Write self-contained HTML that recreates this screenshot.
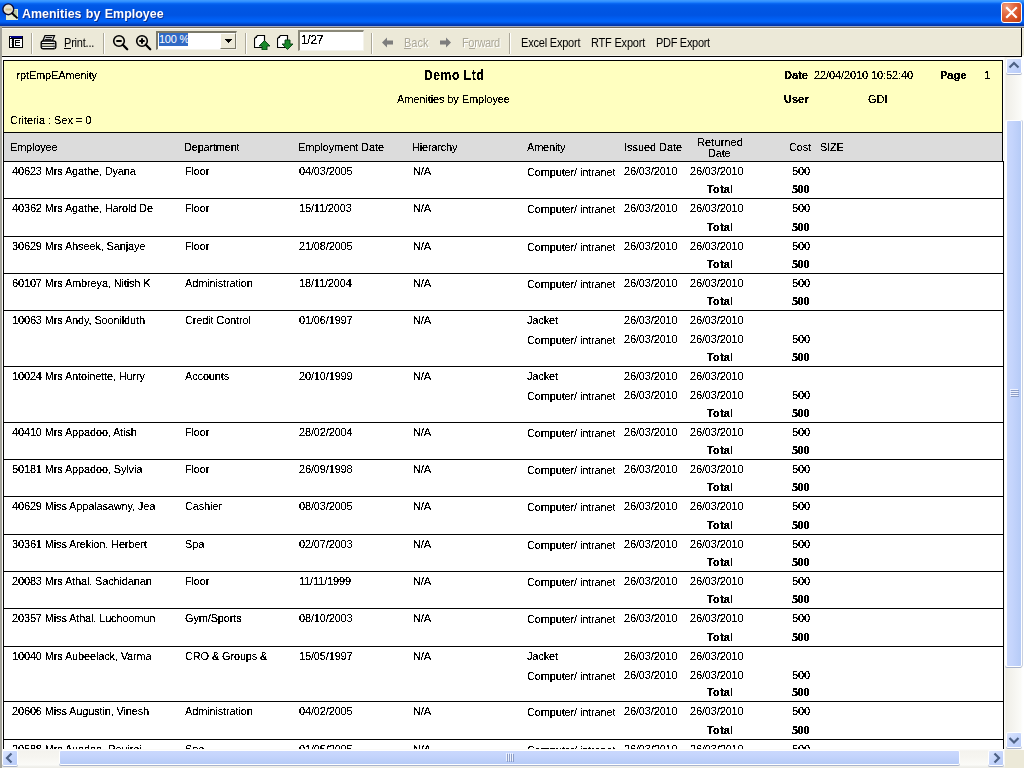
<!DOCTYPE html>
<html><head><meta charset="utf-8">
<style>
*{margin:0;padding:0;box-sizing:border-box}
html,body{width:1024px;height:768px;overflow:hidden;background:#fff;font-family:"Liberation Sans",sans-serif;position:relative}
.a{position:absolute}
.t{position:absolute;white-space:pre;color:#000}
#title{left:0;top:0;width:1024px;height:26px;background:linear-gradient(#3d9bff 0px,#3a97ff 1px,#1c7efc 2.5px,#0a68f2 3.5px,#005ae8 5px,#0056e4 9px,#0054e2 15px,#005cef 18px,#0064fa 21px,#0060f4 22px,#004cd6 23.5px,#0038b0 25px,#0032a4 26px);}
#ttxt{left:21.5px;top:7px;word-spacing:1px;color:#fff;font-weight:bold;font-size:13.5px;line-height:13px;transform:scaleX(0.922);transform-origin:0 0;text-shadow:1px 1px 0 #0a2a8a;white-space:pre}
#close{left:1001px;top:2px;width:21px;height:21px;border:1px solid #fff;border-radius:3px;background:radial-gradient(circle at 25% 20%,#f0a080 0,#e2643c 40%,#d24a1c 75%,#b8380e 100%);}
#view{left:0;top:0;width:1004px;height:749px;overflow:hidden}
.sep{position:absolute;top:33px;height:21px;width:1px;background:#aca899;box-shadow:1px 0 0 #fff}
</style></head><body>
<svg width="0" height="0" style="position:absolute"><filter id="crisp" x="-10%" y="-50%" width="120%" height="200%" color-interpolation-filters="sRGB"><feComponentTransfer><feFuncA type="discrete" tableValues="0 0 1 1 1"/></feComponentTransfer></filter><filter id="crispB" x="-10%" y="-50%" width="120%" height="200%" color-interpolation-filters="sRGB"><feComponentTransfer><feFuncA type="discrete" tableValues="0 0 0 1 1 1 1 1 1 1"/></feComponentTransfer></filter></svg>
<div id="title" class="a"></div>
<svg class="a" style="left:0px;top:0px" width="22" height="24" viewBox="0 0 22 24">
 <rect x="6" y="9" width="12" height="11" fill="#e4ecd0"/>
 <rect x="13" y="10" width="4" height="7" fill="#b8c8a0"/>
 <circle cx="8.3" cy="9.3" r="5.4" fill="#e8e4d0" stroke="#0a0a30" stroke-width="1.4"/>
 <rect x="5.5" y="8.5" width="6" height="2" fill="#c0a860" opacity="0.6"/>
 <path d="M11.5 12.8 L17.6 18.4" stroke="#000" stroke-width="1.9"/>
</svg>
<div id="ttxt" class="a">Amenities by Employee</div>
<div id="close" class="a"><svg class="a" style="left:0;top:0" width="19" height="19" viewBox="0 0 19 19"><path d="M5 5 L14 14 M14 5 L5 14" stroke="#fff" stroke-width="2.2" stroke-linecap="square"/></svg></div>
<!-- toolbar -->
<div class="a" style="left:0;top:26px;width:1024px;height:1px;background:#9eaac4"></div>
<div class="a" style="left:0;top:27px;width:1024px;height:1px;background:#726a5c"></div>
<div class="a" style="left:0;top:28px;width:1024px;height:28px;background:#ece9d8;border-top:1px solid #fcfcf8;border-bottom:1px solid #f6f5ee"></div>
<div class="a" style="left:0;top:26px;width:2px;height:742px;background:#a4a39a"></div>
<div class="a" style="left:2px;top:56px;width:1020px;height:1px;background:#000"></div>
<div class="a" style="left:1021px;top:28px;width:1px;height:29px;background:#000"></div>
<!-- tree icon -->
<svg class="a" style="left:9px;top:36px" width="14" height="12" viewBox="0 0 14 12" shape-rendering="crispEdges">
 <rect x="0" y="0" width="14" height="12" fill="#000"/>
 <rect x="1" y="0" width="12" height="2" fill="#000080"/>
 <rect x="1" y="1" width="1" height="1" fill="#fff"/>
 <rect x="1" y="3" width="2" height="8" fill="#fff"/>
 <rect x="2" y="4" width="1" height="1" fill="#c0c0c0"/><rect x="2" y="6" width="1" height="1" fill="#c0c0c0"/><rect x="2" y="8" width="1" height="1" fill="#c0c0c0"/>
 <rect x="5" y="3" width="8" height="8" fill="#fff"/>
 <rect x="6" y="4" width="1" height="6" fill="#000"/>
 <rect x="6" y="4" width="5" height="1" fill="#000"/>
 <rect x="6" y="6" width="5" height="1" fill="#000"/>
 <rect x="6" y="9" width="5" height="1" fill="#000"/>
</svg>
<div class="sep" style="left:31px"></div>
<!-- printer -->
<svg class="a" style="left:40px;top:35px" width="17" height="15" viewBox="0 0 17 15">
 <path d="M5 0.7 H14.5 L12.3 6 H2.8 Z" fill="#fff" stroke="#000" stroke-width="1.2"/>
 <path d="M5.6 2.6 H12.2 M4.6 4.4 H11.5" stroke="#000" stroke-width="1"/>
 <path d="M1.2 8 Q1.2 6 3.2 6 H13.5 Q15.8 6 15.8 8 V11.5 Q15.8 13.8 13.5 13.8 H3.2 Q1.2 13.8 1.2 11.5 Z" fill="#fff" stroke="#000" stroke-width="1.4"/>
 <path d="M1.5 8.6 H15.5 M2 11.2 H15" stroke="#000" stroke-width="1.1"/>
 <rect x="3" y="9.4" width="9" height="1.2" fill="#d8d8b0"/>
 <path d="M13.5 7.5 L15 9 M13.5 10 L15 11.5 M13.5 12.5 L14.5 13.3" stroke="#808080" stroke-width="0.8"/>
</svg>
<div class="t" style="left:64px;top:37px;font-size:11px;line-height:11px;letter-spacing:-0.2px;transform:scaleY(1.125);transform-origin:0 0">Print...</div>
<div class="a" style="left:64px;top:48px;width:7px;height:1px;background:#000"></div>
<div class="sep" style="left:103px"></div>
<!-- zoom out / in -->
<svg class="a" style="left:111px;top:33px" width="20" height="18" viewBox="0 0 20 18">
 <circle cx="8" cy="8" r="5.3" fill="none" stroke="#000" stroke-width="1.6"/>
 <path d="M5.3 8 H10.7" stroke="#000" stroke-width="2"/>
 <path d="M11.8 11.8 L16.2 16.2" stroke="#000" stroke-width="2.3" stroke-linecap="round"/>
</svg>
<svg class="a" style="left:134px;top:33px" width="20" height="18" viewBox="0 0 20 18">
 <circle cx="8" cy="8" r="5.3" fill="none" stroke="#000" stroke-width="1.6"/>
 <path d="M5.3 8 H10.7 M8 5.3 V10.7" stroke="#000" stroke-width="2"/>
 <path d="M11.8 11.8 L16.2 16.2" stroke="#000" stroke-width="2.3" stroke-linecap="round"/>
</svg>
<!-- zoom combo -->
<div class="a" style="left:156px;top:31px;width:81px;height:19px;background:#fff;border-top:2px solid #7a7868;border-left:2px solid #7a7868;border-right:1px solid #f4f3ec;border-bottom:1px solid #f4f3ec"></div>
<div class="a" style="left:159px;top:33px;width:29px;height:13px;background:#316ac5"></div>
<div class="t" style="left:159px;top:34px;font-size:11px;line-height:11px;color:#fff;letter-spacing:-0.25px">100 %</div>
<div class="a" style="left:220px;top:33px;width:16px;height:16px;background:#ece9d8;border-right:1px solid #7a7868;border-bottom:1px solid #7a7868;border-top:1px solid #fff;border-left:1px solid #fff"></div>
<svg class="a" style="left:225px;top:39px" width="7" height="4" viewBox="0 0 7 4" shape-rendering="crispEdges"><path d="M0 0 H7 V1 H6 V2 H5 V3 H4 V4 H3 V3 H2 V2 H1 V1 H0 Z" fill="#000"/></svg>
<div class="sep" style="left:245px"></div>
<!-- page up / down -->
<svg class="a" style="left:254px;top:35px" width="17" height="15" viewBox="0 0 17 15">
 <path d="M3.5 0.5 H10.5 V12.5 H0.5 V3.5 Z" fill="#fff" stroke="#000" stroke-width="1.15"/>
 <rect x="2" y="2" width="1" height="1" fill="#000"/>
 <path d="M10.5 5.5 L16 11 H13 V15 H8 V11 H5 Z" fill="#1a8a2a" stroke="#063a10" stroke-width="0.9" stroke-linejoin="miter"/>
</svg>
<svg class="a" style="left:277px;top:35px" width="17" height="15" viewBox="0 0 17 15">
 <path d="M3.5 0.5 H10.5 V12.5 H0.5 V3.5 Z" fill="#fff" stroke="#000" stroke-width="1.15"/>
 <rect x="2" y="2" width="1" height="1" fill="#000"/>
 <path d="M8 5 H13 V9 H16 L10.5 14.5 L5 9 H8 Z" fill="#1a8a2a" stroke="#063a10" stroke-width="0.9" stroke-linejoin="miter"/>
</svg>
<div class="a" style="left:298px;top:30px;width:66px;height:21px;background:#fff;border-top:2px solid #8a8878;border-left:2px solid #8a8878;border-right:1px solid #f4f3ec;border-bottom:1px solid #f4f3ec"></div>
<div class="t" style="filter:url(#crisp);left:301px;top:34px;font-size:12px;line-height:12px;letter-spacing:-0.3px">1/27</div>
<div class="sep" style="left:371px"></div>
<!-- back / forward -->
<svg class="a" style="left:382px;top:37px" width="12" height="11" viewBox="0 0 12 11"><path d="M0 5.5 L5 0.5 V3.5 H11 V7.5 H5 V10.5 Z" fill="#7d7d7d"/></svg>
<div class="t" style="left:404px;top:37px;font-size:11px;line-height:11px;letter-spacing:0px;transform:scaleY(1.125);transform-origin:0 0;color:#aca899;text-shadow:1px 1px 0 #fff">Back</div>
<div class="a" style="left:404px;top:48px;width:7px;height:1px;background:#aca899"></div>
<svg class="a" style="left:439px;top:37px" width="12" height="11" viewBox="0 0 12 11"><path d="M12 5.5 L7 0.5 V3.5 H1 V7.5 H7 V10.5 Z" fill="#7d7d7d"/></svg>
<div class="t" style="left:462px;top:37px;font-size:11px;line-height:11px;color:#aca899;letter-spacing:-0.35px;transform:scaleY(1.125);transform-origin:0 0;text-shadow:1px 1px 0 #fff">Forward</div>
<div class="a" style="left:469px;top:48px;width:6px;height:1px;background:#aca899"></div>
<div class="sep" style="left:509px"></div>
<div class="t" style="left:521px;top:37px;font-size:11px;line-height:11px;letter-spacing:-0.2px;transform:scaleY(1.125);transform-origin:0 0">Excel Export</div>
<div class="t" style="left:591px;top:37px;font-size:11px;line-height:11px;letter-spacing:-0.2px;transform:scaleY(1.125);transform-origin:0 0">RTF Export</div>
<div class="t" style="left:656px;top:37px;font-size:11px;line-height:11px;letter-spacing:-0.3px;transform:scaleY(1.125);transform-origin:0 0">PDF Export</div>
<!-- report header -->
<div class="a" style="left:3px;top:60px;width:1000px;height:73px;background:#ffffc0;border:1px solid #000;border-bottom:1px solid #000"></div>
<div class="a" style="left:3px;top:133px;width:1000px;height:29px;background:#dcdcdc;border-left:1px solid #000;border-right:1px solid #000"></div>
<div class="a" style="left:0;top:0;width:1024px;height:200px;filter:url(#crisp)">
<div class="t" style="left:424px;top:68px;font-size:14px;line-height:14px;font-weight:bold;letter-spacing:0.7px;transform:scaleX(0.86);transform-origin:0 0">Demo Ltd</div>
<div class="t" style="left:16.5px;top:70px;font-size:11px;line-height:11px;letter-spacing:-0.15px">rptEmpEAmenity</div>
<div class="t" style="left:397px;top:94px;font-size:11px;line-height:11px;letter-spacing:-0.1px">Amenities by Employee</div>
<div class="t" style="left:10px;top:115px;font-size:11px;line-height:11px;letter-spacing:-0.05px">Criteria : Sex = 0</div>
<div class="t" style="left:814px;top:70px;font-size:11px;line-height:11px;letter-spacing:-0.1px">22/04/2010 10:52:40</div>
<div class="t" style="left:984px;top:70px;font-size:11px;line-height:11px">1</div>
<div class="t" style="left:868px;top:94px;font-size:11px;line-height:11px">GDI</div>
<div class="t" style="left:10px;top:142px;font-size:11px;line-height:11px;letter-spacing:-0.2px">Employee</div>
<div class="t" style="left:184px;top:142px;font-size:11px;line-height:11px;letter-spacing:-0.2px">Department</div>
<div class="t" style="left:298px;top:142px;font-size:11px;line-height:11px;letter-spacing:-0.1px">Employment Date</div>
<div class="t" style="left:412px;top:142px;font-size:11px;line-height:11px;letter-spacing:-0.2px">Hierarchy</div>
<div class="t" style="left:527px;top:142px;font-size:11px;line-height:11px;letter-spacing:-0.2px">Amenity</div>
<div class="t" style="left:624px;top:142px;font-size:11px;line-height:11px;letter-spacing:-0.05px">Issued Date</div>
<div class="t" style="left:697px;top:137px;font-size:11px;line-height:11px;letter-spacing:0.1px">Returned</div>
<div class="t" style="left:708px;top:148px;font-size:11px;line-height:11px;letter-spacing:-0.2px">Date</div>
<div class="t" style="left:789px;top:142px;font-size:11px;line-height:11px;letter-spacing:-0.2px">Cost</div>
<div class="t" style="left:820px;top:142px;font-size:11px;line-height:11px;letter-spacing:-0.2px">SIZE</div>
</div>
<div class="a" style="left:0;top:0;width:1024px;height:200px;filter:url(#crispB)">
<div class="t" style="left:784px;top:70px;font-size:11px;line-height:11px;font-weight:bold">Date</div>
<div class="t" style="left:940px;top:70px;font-size:11px;line-height:11px;font-weight:bold">Page</div>
<div class="t" style="left:784px;top:94px;font-size:11px;line-height:11px;font-weight:bold">User</div>
</div>
<!-- left/right verticals -->
<div class="a" style="left:3px;top:161px;width:1px;height:588px;background:#000"></div>
<div class="a" style="left:1003px;top:161px;width:1px;height:588px;background:#000"></div>

<div id="view" class="a" style="filter:url(#crisp)"><div class="a" style="left:3px;top:161px;width:1001px;height:1px;background:#000"></div>
<div class="t" style="left:12px;top:166px;font-size:11px;line-height:11px;letter-spacing:-0.15px;">40623 Mrs Agathe, Dyana</div>
<div class="t" style="left:185px;top:166px;font-size:11px;line-height:11px;letter-spacing:-0.15px;">Floor</div>
<div class="t" style="left:299px;top:166px;font-size:11px;line-height:11px;letter-spacing:-0.15px;">04/03/2005</div>
<div class="t" style="left:413px;top:166px;font-size:11px;line-height:11px;letter-spacing:-0.15px;">N/A</div>
<div class="t" style="left:527px;top:167px;font-size:11px;line-height:11px;letter-spacing:-0.15px;">Computer/ intranet</div>
<div class="t" style="left:624px;top:166px;font-size:11px;line-height:11px;letter-spacing:-0.15px;">26/03/2010</div>
<div class="t" style="left:690px;top:166px;font-size:11px;line-height:11px;letter-spacing:-0.15px;">26/03/2010</div>
<div class="t" style="left:792px;top:166px;font-size:11px;line-height:11px;letter-spacing:-0.15px;">500</div>
<div class="a" style="left:3px;top:198px;width:1001px;height:1px;background:#000"></div>
<div class="t" style="left:12px;top:203px;font-size:11px;line-height:11px;letter-spacing:-0.15px;">40362 Mrs Agathe, Harold De</div>
<div class="t" style="left:185px;top:203px;font-size:11px;line-height:11px;letter-spacing:-0.15px;">Floor</div>
<div class="t" style="left:299px;top:203px;font-size:11px;line-height:11px;letter-spacing:-0.15px;">15/11/2003</div>
<div class="t" style="left:413px;top:203px;font-size:11px;line-height:11px;letter-spacing:-0.15px;">N/A</div>
<div class="t" style="left:527px;top:204px;font-size:11px;line-height:11px;letter-spacing:-0.15px;">Computer/ intranet</div>
<div class="t" style="left:624px;top:203px;font-size:11px;line-height:11px;letter-spacing:-0.15px;">26/03/2010</div>
<div class="t" style="left:690px;top:203px;font-size:11px;line-height:11px;letter-spacing:-0.15px;">26/03/2010</div>
<div class="t" style="left:792px;top:203px;font-size:11px;line-height:11px;letter-spacing:-0.15px;">500</div>
<div class="a" style="left:3px;top:236px;width:1001px;height:1px;background:#000"></div>
<div class="t" style="left:12px;top:241px;font-size:11px;line-height:11px;letter-spacing:-0.15px;">30629 Mrs Ahseek, Sanjaye</div>
<div class="t" style="left:185px;top:241px;font-size:11px;line-height:11px;letter-spacing:-0.15px;">Floor</div>
<div class="t" style="left:299px;top:241px;font-size:11px;line-height:11px;letter-spacing:-0.15px;">21/08/2005</div>
<div class="t" style="left:413px;top:241px;font-size:11px;line-height:11px;letter-spacing:-0.15px;">N/A</div>
<div class="t" style="left:527px;top:242px;font-size:11px;line-height:11px;letter-spacing:-0.15px;">Computer/ intranet</div>
<div class="t" style="left:624px;top:241px;font-size:11px;line-height:11px;letter-spacing:-0.15px;">26/03/2010</div>
<div class="t" style="left:690px;top:241px;font-size:11px;line-height:11px;letter-spacing:-0.15px;">26/03/2010</div>
<div class="t" style="left:792px;top:241px;font-size:11px;line-height:11px;letter-spacing:-0.15px;">500</div>
<div class="a" style="left:3px;top:273px;width:1001px;height:1px;background:#000"></div>
<div class="t" style="left:12px;top:278px;font-size:11px;line-height:11px;letter-spacing:-0.15px;">60107 Mrs Ambreya, Nitish K</div>
<div class="t" style="left:185px;top:278px;font-size:11px;line-height:11px;letter-spacing:-0.15px;">Administration</div>
<div class="t" style="left:299px;top:278px;font-size:11px;line-height:11px;letter-spacing:-0.15px;">18/11/2004</div>
<div class="t" style="left:413px;top:278px;font-size:11px;line-height:11px;letter-spacing:-0.15px;">N/A</div>
<div class="t" style="left:527px;top:279px;font-size:11px;line-height:11px;letter-spacing:-0.15px;">Computer/ intranet</div>
<div class="t" style="left:624px;top:278px;font-size:11px;line-height:11px;letter-spacing:-0.15px;">26/03/2010</div>
<div class="t" style="left:690px;top:278px;font-size:11px;line-height:11px;letter-spacing:-0.15px;">26/03/2010</div>
<div class="t" style="left:792px;top:278px;font-size:11px;line-height:11px;letter-spacing:-0.15px;">500</div>
<div class="a" style="left:3px;top:310px;width:1001px;height:1px;background:#000"></div>
<div class="t" style="left:12px;top:315px;font-size:11px;line-height:11px;letter-spacing:-0.15px;">10063 Mrs Andy, Soonilduth</div>
<div class="t" style="left:185px;top:315px;font-size:11px;line-height:11px;letter-spacing:-0.15px;">Credit Control</div>
<div class="t" style="left:299px;top:315px;font-size:11px;line-height:11px;letter-spacing:-0.15px;">01/06/1997</div>
<div class="t" style="left:413px;top:315px;font-size:11px;line-height:11px;letter-spacing:-0.15px;">N/A</div>
<div class="t" style="left:527px;top:315px;font-size:11px;line-height:11px;letter-spacing:-0.15px;">Jacket</div>
<div class="t" style="left:624px;top:315px;font-size:11px;line-height:11px;letter-spacing:-0.15px;">26/03/2010</div>
<div class="t" style="left:690px;top:315px;font-size:11px;line-height:11px;letter-spacing:-0.15px;">26/03/2010</div>
<div class="t" style="left:527px;top:335px;font-size:11px;line-height:11px;letter-spacing:-0.15px;">Computer/ intranet</div>
<div class="t" style="left:624px;top:334px;font-size:11px;line-height:11px;letter-spacing:-0.15px;">26/03/2010</div>
<div class="t" style="left:690px;top:334px;font-size:11px;line-height:11px;letter-spacing:-0.15px;">26/03/2010</div>
<div class="t" style="left:792px;top:334px;font-size:11px;line-height:11px;letter-spacing:-0.15px;">500</div>
<div class="a" style="left:3px;top:366px;width:1001px;height:1px;background:#000"></div>
<div class="t" style="left:12px;top:371px;font-size:11px;line-height:11px;letter-spacing:-0.15px;">10024 Mrs Antoinette, Hurry</div>
<div class="t" style="left:185px;top:371px;font-size:11px;line-height:11px;letter-spacing:-0.15px;">Accounts</div>
<div class="t" style="left:299px;top:371px;font-size:11px;line-height:11px;letter-spacing:-0.15px;">20/10/1999</div>
<div class="t" style="left:413px;top:371px;font-size:11px;line-height:11px;letter-spacing:-0.15px;">N/A</div>
<div class="t" style="left:527px;top:371px;font-size:11px;line-height:11px;letter-spacing:-0.15px;">Jacket</div>
<div class="t" style="left:624px;top:371px;font-size:11px;line-height:11px;letter-spacing:-0.15px;">26/03/2010</div>
<div class="t" style="left:690px;top:371px;font-size:11px;line-height:11px;letter-spacing:-0.15px;">26/03/2010</div>
<div class="t" style="left:527px;top:391px;font-size:11px;line-height:11px;letter-spacing:-0.15px;">Computer/ intranet</div>
<div class="t" style="left:624px;top:390px;font-size:11px;line-height:11px;letter-spacing:-0.15px;">26/03/2010</div>
<div class="t" style="left:690px;top:390px;font-size:11px;line-height:11px;letter-spacing:-0.15px;">26/03/2010</div>
<div class="t" style="left:792px;top:390px;font-size:11px;line-height:11px;letter-spacing:-0.15px;">500</div>
<div class="a" style="left:3px;top:422px;width:1001px;height:1px;background:#000"></div>
<div class="t" style="left:12px;top:427px;font-size:11px;line-height:11px;letter-spacing:-0.15px;">40410 Mrs Appadoo, Atish</div>
<div class="t" style="left:185px;top:427px;font-size:11px;line-height:11px;letter-spacing:-0.15px;">Floor</div>
<div class="t" style="left:299px;top:427px;font-size:11px;line-height:11px;letter-spacing:-0.15px;">28/02/2004</div>
<div class="t" style="left:413px;top:427px;font-size:11px;line-height:11px;letter-spacing:-0.15px;">N/A</div>
<div class="t" style="left:527px;top:428px;font-size:11px;line-height:11px;letter-spacing:-0.15px;">Computer/ intranet</div>
<div class="t" style="left:624px;top:427px;font-size:11px;line-height:11px;letter-spacing:-0.15px;">26/03/2010</div>
<div class="t" style="left:690px;top:427px;font-size:11px;line-height:11px;letter-spacing:-0.15px;">26/03/2010</div>
<div class="t" style="left:792px;top:427px;font-size:11px;line-height:11px;letter-spacing:-0.15px;">500</div>
<div class="a" style="left:3px;top:459px;width:1001px;height:1px;background:#000"></div>
<div class="t" style="left:12px;top:464px;font-size:11px;line-height:11px;letter-spacing:-0.15px;">50181 Mrs Appadoo, Sylvia</div>
<div class="t" style="left:185px;top:464px;font-size:11px;line-height:11px;letter-spacing:-0.15px;">Floor</div>
<div class="t" style="left:299px;top:464px;font-size:11px;line-height:11px;letter-spacing:-0.15px;">26/09/1998</div>
<div class="t" style="left:413px;top:464px;font-size:11px;line-height:11px;letter-spacing:-0.15px;">N/A</div>
<div class="t" style="left:527px;top:465px;font-size:11px;line-height:11px;letter-spacing:-0.15px;">Computer/ intranet</div>
<div class="t" style="left:624px;top:464px;font-size:11px;line-height:11px;letter-spacing:-0.15px;">26/03/2010</div>
<div class="t" style="left:690px;top:464px;font-size:11px;line-height:11px;letter-spacing:-0.15px;">26/03/2010</div>
<div class="t" style="left:792px;top:464px;font-size:11px;line-height:11px;letter-spacing:-0.15px;">500</div>
<div class="a" style="left:3px;top:496px;width:1001px;height:1px;background:#000"></div>
<div class="t" style="left:12px;top:501px;font-size:11px;line-height:11px;letter-spacing:-0.15px;">40629 Miss Appalasawny, Jea</div>
<div class="t" style="left:185px;top:501px;font-size:11px;line-height:11px;letter-spacing:-0.15px;">Cashier</div>
<div class="t" style="left:299px;top:501px;font-size:11px;line-height:11px;letter-spacing:-0.15px;">08/03/2005</div>
<div class="t" style="left:413px;top:501px;font-size:11px;line-height:11px;letter-spacing:-0.15px;">N/A</div>
<div class="t" style="left:527px;top:502px;font-size:11px;line-height:11px;letter-spacing:-0.15px;">Computer/ intranet</div>
<div class="t" style="left:624px;top:501px;font-size:11px;line-height:11px;letter-spacing:-0.15px;">26/03/2010</div>
<div class="t" style="left:690px;top:501px;font-size:11px;line-height:11px;letter-spacing:-0.15px;">26/03/2010</div>
<div class="t" style="left:792px;top:501px;font-size:11px;line-height:11px;letter-spacing:-0.15px;">500</div>
<div class="a" style="left:3px;top:534px;width:1001px;height:1px;background:#000"></div>
<div class="t" style="left:12px;top:539px;font-size:11px;line-height:11px;letter-spacing:-0.15px;">30361 Miss Arekion, Herbert</div>
<div class="t" style="left:185px;top:539px;font-size:11px;line-height:11px;letter-spacing:-0.15px;">Spa</div>
<div class="t" style="left:299px;top:539px;font-size:11px;line-height:11px;letter-spacing:-0.15px;">02/07/2003</div>
<div class="t" style="left:413px;top:539px;font-size:11px;line-height:11px;letter-spacing:-0.15px;">N/A</div>
<div class="t" style="left:527px;top:540px;font-size:11px;line-height:11px;letter-spacing:-0.15px;">Computer/ intranet</div>
<div class="t" style="left:624px;top:539px;font-size:11px;line-height:11px;letter-spacing:-0.15px;">26/03/2010</div>
<div class="t" style="left:690px;top:539px;font-size:11px;line-height:11px;letter-spacing:-0.15px;">26/03/2010</div>
<div class="t" style="left:792px;top:539px;font-size:11px;line-height:11px;letter-spacing:-0.15px;">500</div>
<div class="a" style="left:3px;top:571px;width:1001px;height:1px;background:#000"></div>
<div class="t" style="left:12px;top:576px;font-size:11px;line-height:11px;letter-spacing:-0.15px;">20083 Mrs Athal, Sachidanan</div>
<div class="t" style="left:185px;top:576px;font-size:11px;line-height:11px;letter-spacing:-0.15px;">Floor</div>
<div class="t" style="left:299px;top:576px;font-size:11px;line-height:11px;letter-spacing:-0.15px;">11/11/1999</div>
<div class="t" style="left:413px;top:576px;font-size:11px;line-height:11px;letter-spacing:-0.15px;">N/A</div>
<div class="t" style="left:527px;top:577px;font-size:11px;line-height:11px;letter-spacing:-0.15px;">Computer/ intranet</div>
<div class="t" style="left:624px;top:576px;font-size:11px;line-height:11px;letter-spacing:-0.15px;">26/03/2010</div>
<div class="t" style="left:690px;top:576px;font-size:11px;line-height:11px;letter-spacing:-0.15px;">26/03/2010</div>
<div class="t" style="left:792px;top:576px;font-size:11px;line-height:11px;letter-spacing:-0.15px;">500</div>
<div class="a" style="left:3px;top:608px;width:1001px;height:1px;background:#000"></div>
<div class="t" style="left:12px;top:613px;font-size:11px;line-height:11px;letter-spacing:-0.15px;">20357 Miss Athal, Luchoomun</div>
<div class="t" style="left:185px;top:613px;font-size:11px;line-height:11px;letter-spacing:-0.15px;">Gym/Sports</div>
<div class="t" style="left:299px;top:613px;font-size:11px;line-height:11px;letter-spacing:-0.15px;">08/10/2003</div>
<div class="t" style="left:413px;top:613px;font-size:11px;line-height:11px;letter-spacing:-0.15px;">N/A</div>
<div class="t" style="left:527px;top:614px;font-size:11px;line-height:11px;letter-spacing:-0.15px;">Computer/ intranet</div>
<div class="t" style="left:624px;top:613px;font-size:11px;line-height:11px;letter-spacing:-0.15px;">26/03/2010</div>
<div class="t" style="left:690px;top:613px;font-size:11px;line-height:11px;letter-spacing:-0.15px;">26/03/2010</div>
<div class="t" style="left:792px;top:613px;font-size:11px;line-height:11px;letter-spacing:-0.15px;">500</div>
<div class="a" style="left:3px;top:646px;width:1001px;height:1px;background:#000"></div>
<div class="t" style="left:12px;top:651px;font-size:11px;line-height:11px;letter-spacing:-0.15px;">10040 Mrs Aubeelack, Varma</div>
<div class="t" style="left:185px;top:651px;font-size:11px;line-height:11px;letter-spacing:-0.15px;">CRO &amp; Groups &amp;</div>
<div class="t" style="left:299px;top:651px;font-size:11px;line-height:11px;letter-spacing:-0.15px;">15/05/1997</div>
<div class="t" style="left:413px;top:651px;font-size:11px;line-height:11px;letter-spacing:-0.15px;">N/A</div>
<div class="t" style="left:527px;top:651px;font-size:11px;line-height:11px;letter-spacing:-0.15px;">Jacket</div>
<div class="t" style="left:624px;top:651px;font-size:11px;line-height:11px;letter-spacing:-0.15px;">26/03/2010</div>
<div class="t" style="left:690px;top:651px;font-size:11px;line-height:11px;letter-spacing:-0.15px;">26/03/2010</div>
<div class="t" style="left:527px;top:671px;font-size:11px;line-height:11px;letter-spacing:-0.15px;">Computer/ intranet</div>
<div class="t" style="left:624px;top:670px;font-size:11px;line-height:11px;letter-spacing:-0.15px;">26/03/2010</div>
<div class="t" style="left:690px;top:670px;font-size:11px;line-height:11px;letter-spacing:-0.15px;">26/03/2010</div>
<div class="t" style="left:792px;top:670px;font-size:11px;line-height:11px;letter-spacing:-0.15px;">500</div>
<div class="a" style="left:3px;top:701px;width:1001px;height:1px;background:#000"></div>
<div class="t" style="left:12px;top:706px;font-size:11px;line-height:11px;letter-spacing:-0.15px;">20606 Miss Augustin, Vinesh</div>
<div class="t" style="left:185px;top:706px;font-size:11px;line-height:11px;letter-spacing:-0.15px;">Administration</div>
<div class="t" style="left:299px;top:706px;font-size:11px;line-height:11px;letter-spacing:-0.15px;">04/02/2005</div>
<div class="t" style="left:413px;top:706px;font-size:11px;line-height:11px;letter-spacing:-0.15px;">N/A</div>
<div class="t" style="left:527px;top:707px;font-size:11px;line-height:11px;letter-spacing:-0.15px;">Computer/ intranet</div>
<div class="t" style="left:624px;top:706px;font-size:11px;line-height:11px;letter-spacing:-0.15px;">26/03/2010</div>
<div class="t" style="left:690px;top:706px;font-size:11px;line-height:11px;letter-spacing:-0.15px;">26/03/2010</div>
<div class="t" style="left:792px;top:706px;font-size:11px;line-height:11px;letter-spacing:-0.15px;">500</div>
<div class="a" style="left:3px;top:739px;width:1001px;height:1px;background:#000"></div>
<div class="t" style="left:12px;top:744px;font-size:11px;line-height:11px;letter-spacing:-0.15px;">20588 Mrs Aundee, Rouirai</div>
<div class="t" style="left:185px;top:744px;font-size:11px;line-height:11px;letter-spacing:-0.15px;">Spa</div>
<div class="t" style="left:299px;top:744px;font-size:11px;line-height:11px;letter-spacing:-0.15px;">01/05/2005</div>
<div class="t" style="left:413px;top:744px;font-size:11px;line-height:11px;letter-spacing:-0.15px;">N/A</div>
<div class="t" style="left:527px;top:745px;font-size:11px;line-height:11px;letter-spacing:-0.15px;">Computer/ intranet</div>
<div class="t" style="left:624px;top:744px;font-size:11px;line-height:11px;letter-spacing:-0.15px;">26/03/2010</div>
<div class="t" style="left:690px;top:744px;font-size:11px;line-height:11px;letter-spacing:-0.15px;">26/03/2010</div>
<div class="t" style="left:792px;top:744px;font-size:11px;line-height:11px;letter-spacing:-0.15px;">500</div></div>
<div class="a" style="left:0;top:0;width:1004px;height:749px;overflow:hidden;filter:url(#crispB)"><div class="t" style="left:707px;top:184px;font-size:11px;line-height:11px;letter-spacing:0.15px;font-weight:700;">Total</div>
<div class="t" style="left:792px;top:183px;font-size:12px;line-height:12px;letter-spacing:-0.4px;font-weight:700;font-family:'Liberation Serif',serif;">500</div>
<div class="t" style="left:707px;top:222px;font-size:11px;line-height:11px;letter-spacing:0.15px;font-weight:700;">Total</div>
<div class="t" style="left:792px;top:221px;font-size:12px;line-height:12px;letter-spacing:-0.4px;font-weight:700;font-family:'Liberation Serif',serif;">500</div>
<div class="t" style="left:707px;top:259px;font-size:11px;line-height:11px;letter-spacing:0.15px;font-weight:700;">Total</div>
<div class="t" style="left:792px;top:258px;font-size:12px;line-height:12px;letter-spacing:-0.4px;font-weight:700;font-family:'Liberation Serif',serif;">500</div>
<div class="t" style="left:707px;top:296px;font-size:11px;line-height:11px;letter-spacing:0.15px;font-weight:700;">Total</div>
<div class="t" style="left:792px;top:295px;font-size:12px;line-height:12px;letter-spacing:-0.4px;font-weight:700;font-family:'Liberation Serif',serif;">500</div>
<div class="t" style="left:707px;top:352px;font-size:11px;line-height:11px;letter-spacing:0.15px;font-weight:700;">Total</div>
<div class="t" style="left:792px;top:351px;font-size:12px;line-height:12px;letter-spacing:-0.4px;font-weight:700;font-family:'Liberation Serif',serif;">500</div>
<div class="t" style="left:707px;top:408px;font-size:11px;line-height:11px;letter-spacing:0.15px;font-weight:700;">Total</div>
<div class="t" style="left:792px;top:407px;font-size:12px;line-height:12px;letter-spacing:-0.4px;font-weight:700;font-family:'Liberation Serif',serif;">500</div>
<div class="t" style="left:707px;top:445px;font-size:11px;line-height:11px;letter-spacing:0.15px;font-weight:700;">Total</div>
<div class="t" style="left:792px;top:444px;font-size:12px;line-height:12px;letter-spacing:-0.4px;font-weight:700;font-family:'Liberation Serif',serif;">500</div>
<div class="t" style="left:707px;top:482px;font-size:11px;line-height:11px;letter-spacing:0.15px;font-weight:700;">Total</div>
<div class="t" style="left:792px;top:481px;font-size:12px;line-height:12px;letter-spacing:-0.4px;font-weight:700;font-family:'Liberation Serif',serif;">500</div>
<div class="t" style="left:707px;top:520px;font-size:11px;line-height:11px;letter-spacing:0.15px;font-weight:700;">Total</div>
<div class="t" style="left:792px;top:519px;font-size:12px;line-height:12px;letter-spacing:-0.4px;font-weight:700;font-family:'Liberation Serif',serif;">500</div>
<div class="t" style="left:707px;top:557px;font-size:11px;line-height:11px;letter-spacing:0.15px;font-weight:700;">Total</div>
<div class="t" style="left:792px;top:556px;font-size:12px;line-height:12px;letter-spacing:-0.4px;font-weight:700;font-family:'Liberation Serif',serif;">500</div>
<div class="t" style="left:707px;top:594px;font-size:11px;line-height:11px;letter-spacing:0.15px;font-weight:700;">Total</div>
<div class="t" style="left:792px;top:593px;font-size:12px;line-height:12px;letter-spacing:-0.4px;font-weight:700;font-family:'Liberation Serif',serif;">500</div>
<div class="t" style="left:707px;top:632px;font-size:11px;line-height:11px;letter-spacing:0.15px;font-weight:700;">Total</div>
<div class="t" style="left:792px;top:631px;font-size:12px;line-height:12px;letter-spacing:-0.4px;font-weight:700;font-family:'Liberation Serif',serif;">500</div>
<div class="t" style="left:707px;top:687px;font-size:11px;line-height:11px;letter-spacing:0.15px;font-weight:700;">Total</div>
<div class="t" style="left:792px;top:686px;font-size:12px;line-height:12px;letter-spacing:-0.4px;font-weight:700;font-family:'Liberation Serif',serif;">500</div>
<div class="t" style="left:707px;top:725px;font-size:11px;line-height:11px;letter-spacing:0.15px;font-weight:700;">Total</div>
<div class="t" style="left:792px;top:724px;font-size:12px;line-height:12px;letter-spacing:-0.4px;font-weight:700;font-family:'Liberation Serif',serif;">500</div>
<div class="t" style="left:707px;top:762px;font-size:11px;line-height:11px;letter-spacing:0.15px;font-weight:700;">Total</div>
<div class="t" style="left:792px;top:761px;font-size:12px;line-height:12px;letter-spacing:-0.4px;font-weight:700;font-family:'Liberation Serif',serif;">500</div></div>
<!-- white gap under toolbar -->
<div class="a" style="left:2px;top:57px;width:1002px;height:3px;background:#fff"></div>
<!-- vertical scrollbar -->
<div class="a" style="left:1004px;top:57px;width:20px;height:693px;background:linear-gradient(90deg,#fdfdfb 0,#f0efe8 2px,#f4f3ee 8px,#fbfbf8 17px,#fefefe 18px,#fff 20px)"></div>
<div class="a" style="left:1006px;top:58px;width:16px;height:16px;border-radius:2px;background:#fff;box-shadow:0 1px 0 #aab4cc"></div>
<div class="a" style="left:1007px;top:59px;width:14px;height:14px;border-radius:1px;background:linear-gradient(135deg,#dde6fe 0,#c6d6fc 50%,#b8cbf8 100%)"></div>
<svg class="a" style="left:1006px;top:58px" width="16" height="16" viewBox="0 0 16 16"><path d="M3.5 9.5 L8 5 L12.5 9.5" fill="none" stroke="#4d6185" stroke-width="2.2"/></svg>
<div class="a" style="left:1006px;top:732px;width:16px;height:16px;border-radius:2px;background:#fff;box-shadow:0 1px 0 #aab4cc"></div>
<div class="a" style="left:1007px;top:733px;width:14px;height:14px;border-radius:1px;background:linear-gradient(135deg,#dde6fe 0,#c6d6fc 50%,#b8cbf8 100%)"></div>
<svg class="a" style="left:1006px;top:732px" width="16" height="16" viewBox="0 0 16 16"><path d="M3.5 6 L8 10.5 L12.5 6" fill="none" stroke="#4d6185" stroke-width="2.2"/></svg>
<div class="a" style="left:1005px;top:120px;width:17px;height:547px;border-radius:2px;background:#fff;box-shadow:0 1px 0 #aab4cc, 1px 0 0 #c8d0e0"></div>
<div class="a" style="left:1007px;top:121px;width:14px;height:545px;border-radius:1px;background:linear-gradient(90deg,#cad8fd 0,#c4d4fc 40%,#b6cbf7 100%)"></div>
<svg class="a" style="left:1010px;top:389px" width="9" height="8" viewBox="0 0 9 8" shape-rendering="crispEdges">
 <rect x="0" y="0" width="8" height="1" fill="#eef2fe"/><rect x="1" y="1" width="8" height="1" fill="#8c9ec8"/>
 <rect x="0" y="2" width="8" height="1" fill="#eef2fe"/><rect x="1" y="3" width="8" height="1" fill="#8c9ec8"/>
 <rect x="0" y="4" width="8" height="1" fill="#eef2fe"/><rect x="1" y="5" width="8" height="1" fill="#8c9ec8"/>
 <rect x="0" y="6" width="8" height="1" fill="#eef2fe"/><rect x="1" y="7" width="8" height="1" fill="#8c9ec8"/>
</svg>
<!-- horizontal scrollbar -->
<div class="a" style="left:2px;top:749px;width:1003px;height:19px;background:linear-gradient(180deg,#fdfdfb 0,#f4f3ee 2px,#f6f5f0 8px,#fbfbf8 16px,#f2f2ee 17px,#ecebe6 19px)"></div>
<div class="a" style="left:2px;top:750px;width:16px;height:16px;border-radius:2px;background:#fff;box-shadow:0 1px 0 #aab4cc"></div>
<div class="a" style="left:3px;top:751px;width:14px;height:14px;border-radius:1px;background:linear-gradient(135deg,#dde6fe 0,#c6d6fc 50%,#b8cbf8 100%)"></div>
<svg class="a" style="left:2px;top:750px" width="16" height="16" viewBox="0 0 16 16"><path d="M9.5 3.5 L5 8 L9.5 12.5" fill="none" stroke="#4d6185" stroke-width="2.2"/></svg>
<div class="a" style="left:988px;top:750px;width:16px;height:16px;border-radius:2px;background:#fff;box-shadow:0 1px 0 #aab4cc"></div>
<div class="a" style="left:989px;top:751px;width:14px;height:14px;border-radius:1px;background:linear-gradient(135deg,#dde6fe 0,#c6d6fc 50%,#b8cbf8 100%)"></div>
<svg class="a" style="left:988px;top:750px" width="16" height="16" viewBox="0 0 16 16"><path d="M6.5 3.5 L11 8 L6.5 12.5" fill="none" stroke="#4d6185" stroke-width="2.2"/></svg>
<div class="a" style="left:59px;top:750px;width:901px;height:15px;border-radius:2px;background:#fff;box-shadow:0 1px 0 #aab4cc"></div>
<div class="a" style="left:60px;top:751px;width:899px;height:13px;border-radius:1px;background:linear-gradient(180deg,#cad8fd 0,#c4d4fc 40%,#b6cbf7 100%)"></div>
<svg class="a" style="left:506px;top:753px" width="8" height="9" viewBox="0 0 8 9" shape-rendering="crispEdges">
 <rect x="0" y="0" width="1" height="8" fill="#eef2fe"/><rect x="1" y="1" width="1" height="8" fill="#8c9ec8"/>
 <rect x="2" y="0" width="1" height="8" fill="#eef2fe"/><rect x="3" y="1" width="1" height="8" fill="#8c9ec8"/>
 <rect x="4" y="0" width="1" height="8" fill="#eef2fe"/><rect x="5" y="1" width="1" height="8" fill="#8c9ec8"/>
 <rect x="6" y="0" width="1" height="8" fill="#eef2fe"/><rect x="7" y="1" width="1" height="8" fill="#8c9ec8"/>
</svg>
<!-- corner -->
<div class="a" style="left:1005px;top:750px;width:19px;height:18px;background:#ece9d8"></div>
<div class="a" style="left:0;top:26px;width:2px;height:742px;background:#a4a39a"></div>
</body></html>
